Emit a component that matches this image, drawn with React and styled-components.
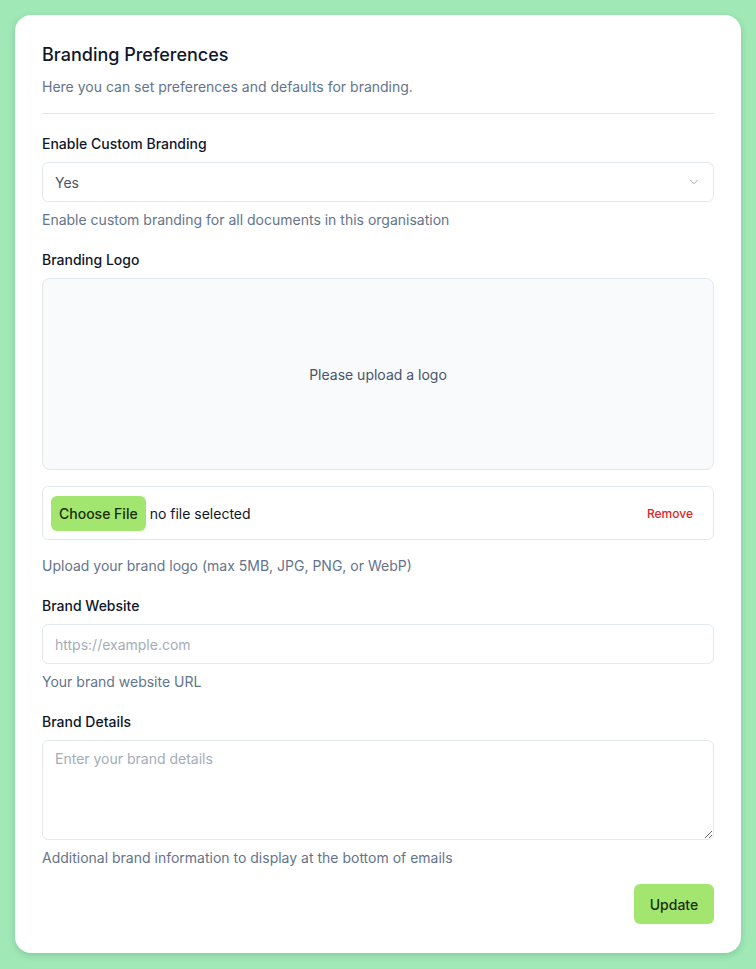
import React from "react";
import styled, { createGlobalStyle } from "styled-components";

const Global = createGlobalStyle`
  html, body { margin: 0; padding: 0; }
  body {
    background: #a0e8b6;
    font-family: Inter, "Noto Sans", sans-serif;
    color: #0f172a;
    -webkit-font-smoothing: antialiased;
  }
  * { box-sizing: border-box; }
`;

const Page = styled.div`
  padding: 15px;
  min-height: 969px;
`;

const Card = styled.div`
  background: #ffffff;
  border-radius: 16px;
  box-shadow: 0 2px 6px rgba(40, 110, 70, 0.25);
  padding: 26px 27px 29px;
  display: flex;
  flex-direction: column;
`;

const Title = styled.h1`
  margin: 0;
  font-size: 18px;
  line-height: 28px;
  font-weight: 500;
  color: #0f172a;
`;

const Subtitle = styled.p`
  margin: 8px 0 0;
  font-size: 14px;
  line-height: 20px;
  color: #64748b;
`;

const Divider = styled.hr`
  margin: 16px 0 20px;
  border: 0;
  border-top: 1px solid #e2e8f0;
`;

const Field = styled.div`
  display: flex;
  flex-direction: column;
  gap: ${(p) => p.$gap || 8}px;
  margin-bottom: 20px;
`;

const Label = styled.label`
  font-size: 14px;
  line-height: 20px;
  font-weight: 500;
  color: #0f172a;
  margin-bottom: ${(p) => p.$after || 0}px;
`;

const Helper = styled.p`
  margin: 0;
  font-size: 14px;
  line-height: 20px;
  color: #64748b;
`;

const SelectBox = styled.div`
  height: 40px;
  border: 1px solid #e2e8f0;
  border-radius: 6px;
  padding: 0 12px;
  display: flex;
  align-items: center;
  justify-content: space-between;
  font-size: 14px;
  color: #475569;
`;

const LogoBox = styled.div`
  height: 192px;
  border: 1px solid #e2e8f0;
  border-radius: 8px;
  background: #f8fafc;
  display: flex;
  align-items: center;
  justify-content: center;
  font-size: 14px;
  color: #475569;
`;

const FileRow = styled.div`
  height: 54px;
  border: 1px solid #e2e8f0;
  border-radius: 6px;
  padding: 0 20px 0 8px;
  display: flex;
  align-items: center;
  font-size: 14px;
`;

const ChooseButton = styled.button`
  height: 35px;
  padding: 0 8px;
  border: 0;
  border-radius: 6px;
  background: #a2e66f;
  color: #1a2e05;
  font-family: inherit;
  font-size: 14px;
  font-weight: 500;
  margin-right: 4px;
`;

const FileName = styled.span`
  color: #0f172a;
  flex: 1;
`;

const RemoveLink = styled.button`
  border: 0;
  background: none;
  padding: 0;
  font-family: inherit;
  font-size: 12px;
  font-weight: 500;
  color: #dc2626;
`;

const Input = styled.input`
  height: 40px;
  border: 1px solid #e2e8f0;
  border-radius: 6px;
  padding: 0 12px;
  font-family: inherit;
  font-size: 14px;
  color: #0f172a;
  outline: none;
  &::placeholder { color: #a3adb9; }
`;

const TextArea = styled.textarea`
  height: 100px;
  border: 1px solid #e2e8f0;
  border-radius: 6px;
  padding: 8px 12px;
  font-family: inherit;
  font-size: 14px;
  line-height: 20px;
  color: #0f172a;
  resize: vertical;
  outline: none;
  &::placeholder { color: #a3adb9; }
`;

const Footer = styled.div`
  display: flex;
  justify-content: flex-end;
  margin-top: -4px;
`;

const UpdateButton = styled.button`
  height: 40px;
  width: 80px;
  border: 0;
  border-radius: 6px;
  background: #a2e66f;
  color: #1a2e05;
  font-family: inherit;
  font-size: 14px;
  font-weight: 500;
`;

const Chevron = () => (
  <svg width="14" height="14" viewBox="0 0 24 24" fill="none" stroke="#94a3b8" strokeWidth="1.6" strokeLinecap="round" strokeLinejoin="round">
    <path d="m6 9 6 6 6-6" />
  </svg>
);

export default function App() {
  return (
    <Page>
      <Global />
      <Card>
        <Title>Branding Preferences</Title>
        <Subtitle>Here you can set preferences and defaults for branding.</Subtitle>
        <Divider />

        <Field>
          <Label>Enable Custom Branding</Label>
          <SelectBox>
            <span>Yes</span>
            <Chevron />
          </SelectBox>
          <Helper>Enable custom branding for all documents in this organisation</Helper>
        </Field>

        <Field $gap={16}>
          <Label $after={-8}>Branding Logo</Label>
          <LogoBox>Please upload a logo</LogoBox>
          <FileRow>
            <ChooseButton>Choose File</ChooseButton>
            <FileName>no file selected</FileName>
            <RemoveLink>Remove</RemoveLink>
          </FileRow>
          <Helper>Upload your brand logo (max 5MB, JPG, PNG, or WebP)</Helper>
        </Field>

        <Field>
          <Label>Brand Website</Label>
          <Input placeholder="https://example.com" />
          <Helper>Your brand website URL</Helper>
        </Field>

        <Field>
          <Label>Brand Details</Label>
          <TextArea placeholder="Enter your brand details" />
          <Helper>Additional brand information to display at the bottom of emails</Helper>
        </Field>

        <Footer>
          <UpdateButton>Update</UpdateButton>
        </Footer>
      </Card>
    </Page>
  );
}
